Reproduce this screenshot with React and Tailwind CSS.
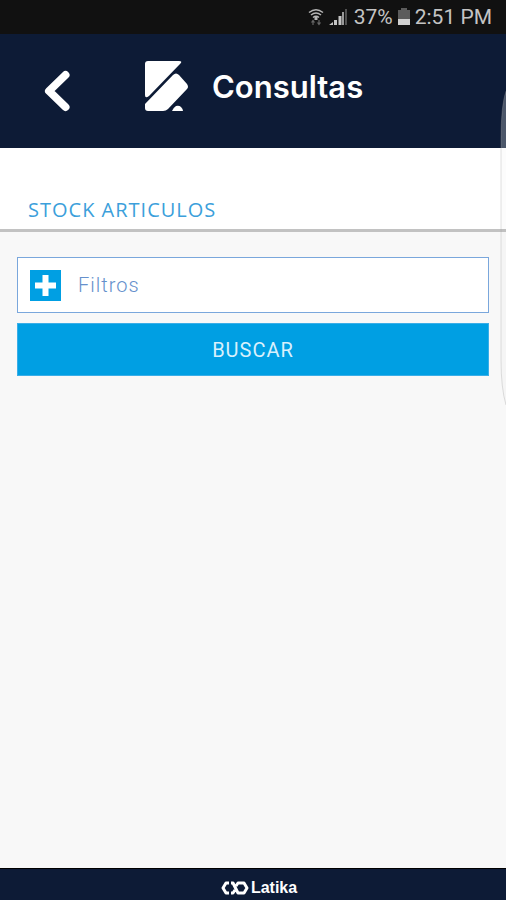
import { useState } from "react";

function StatusBar() {
  return (
    <div className="flex h-[34px] items-center justify-end bg-[#111111] pr-[14px] pt-[2px] font-['Roboto',sans-serif] text-[21px] text-[#c4c4c4]">
      <svg className="mr-[5px] h-5 w-4" viewBox="0 0 16 20" fill="none" stroke="#b5b5b5" strokeWidth="1.5">
        <path d="M1 4.500Q8-1 15 4.500M3 7Q8 3 13 7M5 9.500Q8 7 11 9.500" />
        <path d="M8 9v3" strokeWidth="3" />
        <path d="M5 12v5M3.500 14.500L5 12.500l1.500 2M11 12v5M9.500 14.500L11 16.500l1.500-2" stroke="#666" strokeWidth="1.200" />
      </svg>
      <svg className="mr-[6px] h-5 w-[19px]" viewBox="0 0 19 20">
        <path d="M0 17l4-3v3zM5 12h3v5H5zM9.500 8h3v9h-3z" fill="#c4c4c4" />
        <path d="M13 4h2v13h-2z" fill="#999" />
        <path d="M16 1h2v16h-2z" fill="#505050" />
      </svg>
      <span>37%</span>
      <svg className="mx-[5px] h-5 w-3" viewBox="0 0 12 20">
        <path d="M3 0h6v2h3v10H0V2h3z" fill="#5c5c5c" />
        <path d="M0 11h12v6H0z" fill="#d0d0d0" />
      </svg>
      <span>2:51 PM</span>
    </div>
  );
}

function Header() {
  return (
    <header className="flex h-[114px] items-center bg-[#0d1b36] pb-2 pl-11 text-white">
      <button type="button" aria-label="Volver" className="pt-2">
        <svg className="h-[42px] w-[26px]" viewBox="0 0 26 42" fill="none" stroke="white" strokeWidth="8" strokeLinecap="round" strokeLinejoin="round">
          <path d="M21.500 5L5 21l16.500 16" />
        </svg>
      </button>
      <svg className="ml-[74px] h-[52px] w-[46px]" viewBox="0 0 46 52" fill="white">
        <path d="M4 0h31q4 0 1 3L5 35q-4 3-4-1V3q0-3 3-3z" />
        <path d="M29 14q3-3 6 0l8 9q2 3 0 5L24 48q-2 2-5 2H4q-3 0-3-3v-4z" />
        <path d="M28 50q1-3 4-5 3-1 5 1 2 2 2 4z" />
      </svg>
      <h1 className="ml-[22px] font-['Inter',sans-serif] text-[31px] leading-10 font-semibold">Consultas</h1>
    </header>
  );
}

function App() {
  const [open, setOpen] = useState(false);

  return (
    <div className="relative flex min-h-screen flex-col bg-[#f8f8f8]">
      <StatusBar />
      <Header />

      <div className="flex h-[84px] items-end border-b-[3px] border-[#c2c2c2] bg-white pb-[3px] pl-7">
        <h2 className="font-['Open_Sans',sans-serif] text-xl leading-8 tracking-wider text-[#3c9fdb]">
          STOCK ARTICULOS
        </h2>
      </div>

      <main className="flex flex-1 flex-col gap-[10px] px-[17px] pt-[25px] font-['Roboto',sans-serif] text-xl">
        <button
          type="button"
          aria-expanded={open}
          onClick={() => setOpen(!open)}
          className="flex h-14 items-center border border-[#7aa7dc] bg-white pl-3 font-light tracking-wider text-[#6590cc]"
        >
          <svg className="mr-[17px] h-[31px] w-[31px]" viewBox="0 0 31 31">
            <path d="M0 0h31v31H0z" fill="#009fe3" />
            <path d="M12.500 5h6v7.500H26v6h-7.500V26h-6v-7.500H5v-6h7.500z" fill="white" />
          </svg>
          Filtros
        </button>
        <button type="button" className="h-[53px] border border-[#3aaee8] bg-[#009fe3] tracking-wider text-[#d9f0fc]">
          BUSCAR
        </button>
      </main>

      <footer className="flex h-8 items-center justify-center gap-[2px] border-t border-black bg-[#0d1b36] pl-3 pt-[6px] text-white">
        <svg className="h-[14px] w-[28px]" viewBox="0 0 28 14" fill="none" stroke="white" strokeWidth="3" strokeLinejoin="round">
          <path d="M8 2H5L2 7l3 5h3M10 2h2l5 10h6l3-5-3-5h-6l-2 3M10 12h2l2-3" />
        </svg>
        <span className="font-['Liberation_Sans',sans-serif] text-base font-bold">Latika</span>
      </footer>

      {/* edge panel handle */}
      <svg className="pointer-events-none absolute right-0 top-[90px] h-[316px] w-[6px]" viewBox="0 0 6 316">
        <path d="M6 1Q1 15 1 50v220q0 28 5 45z" fill="#999" fillOpacity="0.030" />
        <path d="M6 1Q1 15 1 50v8h5z" fill="white" fillOpacity="0.250" />
        <path d="M6 1Q1 15 1 50v220q0 28 5 45" fill="none" stroke="#999" strokeOpacity="0.300" />
      </svg>
    </div>
  );
}

export default App;
